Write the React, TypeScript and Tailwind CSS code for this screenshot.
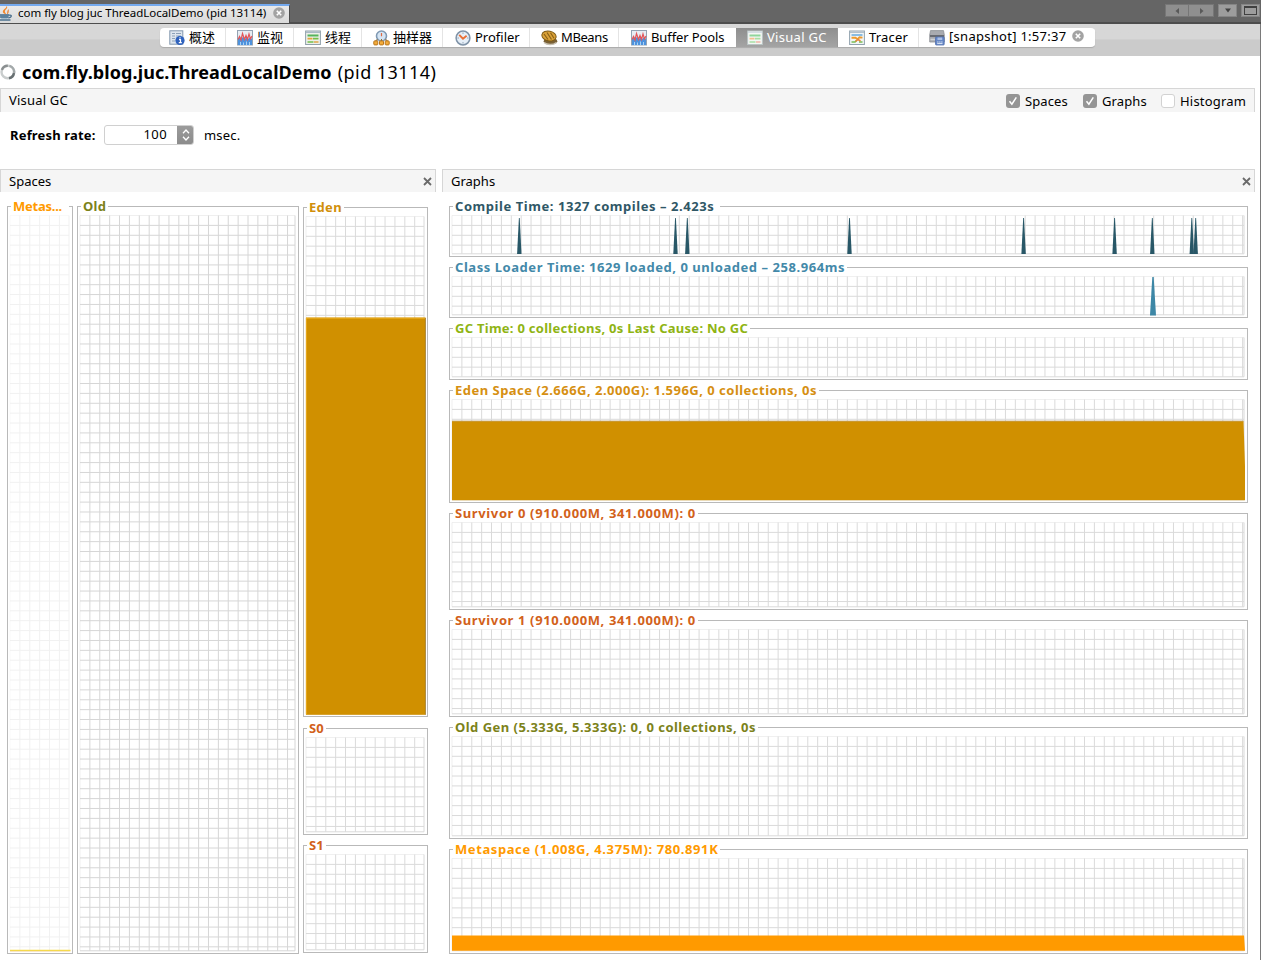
import type { ReactNode } from "react";

const STEP = 9.883;

type ChartProps = {
  w: number;
  h: number;
  x0?: number;
  right?: number;
  grid?: string;
  children?: ReactNode;
};

// w and h are the inner drawing size; the first grid row lies half a pixel from the top.
function Chart({ w, h, x0 = 2, right = 3, grid = "#dadada", children }: ChartProps) {
  const x1 = w - right;
  const y0 = 0.5;
  const y1 = h - 2.2;
  let d = "";
  for (let x = x0 + STEP; x < x1 - 1; x += STEP) d += `M${x.toFixed(2)} ${y0}V${y1}`;
  for (let y = y0 + STEP; y < y1 - 1; y += STEP) d += `M${x0} ${y.toFixed(2)}H${x1}`;
  return (
    <svg width={w} height={h} viewBox={`0 0 ${w} ${h}`} className="block shrink-0" fill="none">
      <path d={d} stroke={grid} strokeWidth="1" />
      <path d={`M${x1} ${y0}V${y1}M${x0} ${y1}H${x1}`} stroke={grid} strokeWidth="1" />
      <path d={`M${x0} ${y0}H${x1}M${x0} ${y0}V${y1}`} stroke={grid} strokeOpacity="0.4" strokeWidth="1" />
      {children}
    </svg>
  );
}

type PanelProps = { className: string; title: string; titleClass: string; children: ReactNode };

function Panel({ className, title, titleClass, children }: PanelProps) {
  return (
    <section className={`flex shrink-0 flex-col items-start border border-[#b9b9b9] ${className}`}>
      <h3
        className={`-mt-[10px] ml-[3px] h-[18px] w-fit whitespace-nowrap bg-white pl-[2px] pr-[2px] text-[13px] font-bold leading-[18px] ${titleClass}`}
      >
        {title}
      </h3>
      {children}
    </section>
  );
}

function CloseCircle() {
  return (
    <svg width="12" height="12" viewBox="0 0 12 12" className="shrink-0">
      <circle cx="6" cy="6" r="5.8" fill="#a3a3a3" />
      <path d="M3.8 3.8l4.4 4.4M8.2 3.8L3.8 8.2" stroke="#fff" strokeWidth="1.6" />
    </svg>
  );
}

function CloseX() {
  return (
    <svg width="9" height="9" viewBox="0 0 9 9" className="shrink-0">
      <path d="M1 1l7 7M8 1L1 8" stroke="#6a6a6a" strokeWidth="1.8" />
    </svg>
  );
}

function JavaIcon() {
  return (
    <svg width="13" height="15" viewBox="0 0 13 15" className="shrink-0">
      <path d="M6.500 0C9 2.200 4 4 5 6c.4 1 1 1.300 1 2.500C3 7.500 1.800 5.500 4 3.500 5.800 2 6.500 1.500 6.500 0z" fill="#f0872c" />
      <path d="M9 3C6.500 5 8 6 6.800 8.300 9.800 6.800 8 5.200 9 3z" fill="#e8731a" />
      <path d="M0 8.500h9.500c0 2.200-1 3.700-2.500 4.200H1.500L0 11.500z" fill="#8fb0c8" />
      <path d="M0 9h9.200M9.300 9.300c2.700-.6 3 2-.9 2.700M.2 11h8M0 14h10.500" stroke="#4c718e" strokeWidth="1.300" fill="none" />
    </svg>
  );
}

function OverviewIcon() {
  return (
    <svg width="16" height="16" viewBox="0 0 16 16">
      <rect x=".8" y=".8" width="13" height="13.400" fill="#dfe7ef" stroke="#8498ae" />
      <path d="M3 3.500h3M7 3.500h5M3 6h3M7 6h5M3 8.500h3M3 11h3" stroke="#8da1b8" strokeWidth="1.200" />
      <circle cx="11" cy="10.500" r="4.600" fill="#2f62bd" />
      <path d="M10 9.600h1.500v3M9.800 12.700h3M11 7.300v1.200" stroke="#fff" strokeWidth="1.200" fill="none" />
    </svg>
  );
}

function MonitorIcon() {
  return (
    <svg width="16" height="16" viewBox="0 0 16 16">
      <rect x=".5" y=".5" width="15" height="14.500" fill="#e8edf3" stroke="#94a3b3" />
      <path d="M1 12V9l2-2.500L4.500 9 6 6.500 8 9l2-2.500 1.500 2.500L13 7l2 2v6H1z" fill="#4d92dd" />
      <path d="M1 9.500L2.500 6.500 4 10l1.500-6.500L7.500 9.500 9 5.500l1.500 4L12 4 13.500 9 15 6" stroke="#e2575a" strokeWidth="1.200" fill="none" />
      <path d="M3.500 15v-3M6.500 15v-2.500M9.500 15v-3.500M12.500 15v-3" stroke="#a9d1f5" strokeWidth="1" />
    </svg>
  );
}

function ThreadsIcon({ pale = false }: { pale?: boolean }) {
  return (
    <svg width="16" height="16" viewBox="0 0 16 16">
      <rect x=".6" y="1" width="14.800" height="13.500" fill={pale ? "#f4f7f4" : "#eef0ea"} stroke={pale ? "#b9c4c4" : "#90a0aa"} />
      <path d="M1 2.200h14" stroke={pale ? "#d4dde4" : "#aab9c6"} strokeWidth="1.600" />
      <path d="M2.500 5.500h11" stroke={pale ? "#8fd69b" : "#55b45b"} strokeWidth="1.900" />
      <path d="M2.500 8.700h5" stroke={pale ? "#f4c08f" : "#e6a33c"} strokeWidth="1.700" />
      <path d="M8 8.700h5.500M2.500 12h6" stroke={pale ? "#a8dfa5" : "#73bf4b"} strokeWidth="1.700" />
      <path d="M9 12h4.500" stroke={pale ? "#f1b5a6" : "#e0a648"} strokeWidth="1.700" />
    </svg>
  );
}

function SamplerIcon() {
  return (
    <svg width="17" height="16" viewBox="0 0 17 16">
      <circle cx="8.500" cy="6" r="5" fill="#d5e5f4" stroke="#8099b3" strokeWidth="1.600" />
      <path d="M8.500 3v3.200" stroke="#df6a42" strokeWidth="1.200" />
      <path d="M3 11.500V10h2M14 11.500V10h-2M8.500 9v2" stroke="#8a6b34" fill="none" />
      <rect x=".8" y="10.900" width="4" height="4" rx=".8" fill="#f3ab3a" stroke="#b8751c" />
      <rect x="6.500" y="10.900" width="4" height="4" rx=".8" fill="#f3ab3a" stroke="#b8751c" />
      <rect x="12.200" y="10.900" width="4" height="4" rx=".8" fill="#f3ab3a" stroke="#b8751c" />
    </svg>
  );
}

function ProfilerIcon() {
  return (
    <svg width="16" height="16" viewBox="0 0 16 16">
      <circle cx="8" cy="8" r="6.900" fill="#e6eff8" stroke="#7f93a8" strokeWidth="1.500" />
      <path d="M8 2.500v1.300M8 12.200v1.300M2.500 8h1.300M12.200 8h1.300" stroke="#8295a8" />
      <path d="M4.200 4.800L8 8.700l3.600-2.900" stroke="#e96f35" strokeWidth="1.900" fill="none" />
    </svg>
  );
}

function BeansIcon() {
  return (
    <svg width="17" height="16" viewBox="0 0 17 16">
      <ellipse cx="9.500" cy="11.200" rx="6.800" ry="3.400" fill="#7a6136" />
      <path d="M3 12.500c3 2.600 9 2.800 12.500 0" stroke="#c8c1b2" strokeWidth="1.500" fill="none" />
      <ellipse cx="8" cy="6" rx="7.200" ry="4.900" fill="#dba238" stroke="#7d5a15" transform="rotate(12 8 6)" />
      <path d="M3 4l4 5.500M6 2.500l4.500 7M9.500 2.800l3.500 5.500" stroke="#8a6219" strokeWidth="1.200" fill="none" />
    </svg>
  );
}

function TracerIcon() {
  return (
    <svg width="16" height="16" viewBox="0 0 16 16">
      <rect x=".6" y="1" width="14.800" height="13.500" fill="#f2f5f6" stroke="#91a2ae" />
      <path d="M1 2.200h14" stroke="#b3c1cc" strokeWidth="1.500" />
      <path d="M2.500 5h11" stroke="#65a9dc" strokeWidth="1.600" />
      <path d="M2.500 7.800h4l2 1.500 2-2 3 .3" stroke="#ed9a2d" strokeWidth="1.900" fill="none" />
      <path d="M2.500 12h3.500l1.500-1.500M10 12h3.500" stroke="#78bd54" strokeWidth="1.700" fill="none" />
      <path d="M6.500 11.500l2.500-2 2.500 1.500" stroke="#e8853a" strokeWidth="1.500" fill="none" />
    </svg>
  );
}

function SnapshotIcon() {
  return (
    <svg width="16" height="16" viewBox="0 0 16 16">
      <path d="M1.500.6h13l.8 4.400v7H.7V5z" fill="#a9abb0" stroke="#8d9096" strokeWidth=".8" />
      <path d="M1 6h14" stroke="#686b72" strokeWidth="1.800" />
      <path d="M1.500 9.500h5" stroke="#cfd1d5" strokeWidth="1.500" />
      <rect x="6.500" y="7" width="8.700" height="8" rx=".8" fill="#6486c6" stroke="#5371ae" strokeWidth=".8" />
      <path d="M8.500 7.500h4.700v2.500H8.500z" fill="#a9bfe6" />
      <path d="M8.200 12h1.300M10.200 12h1.300M12.200 12h1.300M8.200 13.600h5.300" stroke="#dfe8f7" />
    </svg>
  );
}

type TabProps = { className: string; label: string; labelClass?: string; icon: ReactNode; children?: ReactNode };

function ViewTab({ className, label, labelClass = "leading-[19px]", icon, children }: TabProps) {
  return (
    <div className={`flex h-full shrink-0 items-center border-r ${className}`}>
      <span className="flex w-5 shrink-0">{icon}</span>
      <span className={`whitespace-nowrap text-[13px] ${labelClass}`}>{label}</span>
      {children}
    </div>
  );
}

function Check({ label, checked, className }: { label: string; checked: boolean; className: string }) {
  return (
    <label className={`flex shrink-0 items-center gap-[5px] ${className}`}>
      <span
        className={`flex size-[14px] items-center justify-center rounded-[3px] ${
          checked ? "bg-[#959595]" : "border border-[#d2d2d2] bg-white"
        }`}
      >
        {checked && (
          <svg width="10" height="10" viewBox="0 0 10 10" fill="none">
            <path d="M1.500 5.200l2.400 3L8.300 1.300" stroke="#fff" strokeWidth="1.500" />
          </svg>
        )}
      </span>
      <span className="whitespace-nowrap text-[13px] leading-[18px]">{label}</span>
    </label>
  );
}

// Compile bursts, as x positions inside the graph.
const COMPILE_SPIKES = [69.300, 225.500, 237.300, 399.500, 573.600, 664.600, 702.300, 741.800, 745.700];

export default function App() {
  return (
    <div className="flex h-[960px] w-[1261px] flex-col overflow-hidden bg-white font-['Noto_Sans','Noto_Sans_CJK_SC',sans-serif] text-black">
      <header className="flex h-[24px] shrink-0 justify-between border-b-2 border-[#4d4d4d] bg-[#656565]">
        <div className="mt-[4px] flex h-[19px] w-[290px] items-center border-r border-t-2 border-r-[#494949] border-t-[#74a9ee] bg-linear-to-b from-[#e9e9e9] to-[#dadada] pb-[3px]">
          <JavaIcon />
          <span className="ml-[5px] whitespace-nowrap text-[11.5px] leading-[16px] -tracking-[0.02px]">
            com fly blog juc ThreadLocalDemo (pid 13114)
          </span>
          <span className="ml-[7px] flex">
            <CloseCircle />
          </span>
        </div>
        <div className="mt-[4px] flex h-[13px] pr-px">
          <div className="flex w-[24px] items-center justify-center border border-[#767676] bg-[#8f8f8f]">
            <svg width="5" height="6" viewBox="0 0 5 6">
              <path d="M4 0v6L.5 3z" fill="#595959" />
            </svg>
          </div>
          <div className="flex w-[25px] items-center justify-center border border-l-0 border-[#767676] bg-[#8f8f8f]">
            <svg width="5" height="6" viewBox="0 0 5 6">
              <path d="M1 0v6l3.500-3z" fill="#595959" />
            </svg>
          </div>
          <div className="ml-[4px] flex w-[19px] items-center justify-center border border-[#858585] bg-[#9d9d9d]">
            <svg width="6" height="5" viewBox="0 0 6 5">
              <path d="M0 .5h6L3 4.500z" fill="#424242" />
            </svg>
          </div>
          <div className="ml-[4px] flex w-[19px] items-center justify-center border border-[#858585] bg-[#9d9d9d]">
            <span className="h-[9px] w-[13px] border border-t-2 border-[#404040]" />
          </div>
        </div>
      </header>

      <div className="flex min-h-0 grow flex-col border-r border-[#7a7a7a]">
        <nav className="flex h-[32px] shrink-0 bg-linear-to-b from-[#d7d7d7] from-46% to-[#cbcbcb] to-50% pl-[160px] pt-[4px]">
          <div className="flex h-[19px] w-[935px] overflow-hidden rounded-[4px] bg-white shadow-[0_1px_1px_#aaa]">
            <ViewTab className="w-[66px] border-[#e4e4e4] pl-[9px]" label="概述" icon={<OverviewIcon />} />
            <ViewTab className="w-[68px] border-[#e4e4e4] pl-[11px]" label="监视" icon={<MonitorIcon />} />
            <ViewTab className="w-[68px] border-[#e4e4e4] pl-[11px]" label="线程" icon={<ThreadsIcon />} />
            <ViewTab className="w-[81px] border-[#e4e4e4] pl-[11px]" label="抽样器" icon={<SamplerIcon />} />
            <ViewTab className="w-[87px] border-[#e4e4e4] pl-[12px]" label="Profiler" icon={<ProfilerIcon />} />
            <ViewTab
              className="w-[89px] border-[#e4e4e4] pl-[11px]"
              label="MBeans"
              labelClass="leading-[19px] -tracking-[0.4px]"
              icon={<BeansIcon />}
            />
            <ViewTab
              className="w-[117px] border-white pl-[12px]"
              label="Buffer Pools"
              labelClass="leading-[19px] -tracking-[0.1px]"
              icon={<MonitorIcon />}
            />
            <ViewTab
              className="w-[102px] border-[#989898] bg-linear-to-b from-[#8e8e8e] to-[#a4a4a4] pl-[11px]"
              label="Visual GC"
              labelClass="leading-[19px] tracking-[0.3px] text-white"
              icon={<ThreadsIcon pale />}
            />
            <ViewTab
              className="w-[81px] border-[#e4e4e4] pl-[11px]"
              label="Tracer"
              labelClass="leading-[19px] tracking-[0.2px]"
              icon={<TracerIcon />}
            />
            <ViewTab
              className="w-[176px] border-white pl-[10px]"
              label="[snapshot] 1:57:37"
              labelClass="mb-[3px] leading-[16px] tracking-[0.28px]"
              icon={<SnapshotIcon />}
            >
              <span className="mb-[4px] ml-[5px] flex">
                <CloseCircle />
              </span>
            </ViewTab>
          </div>
        </nav>

        <div className="flex h-[32px] shrink-0 items-center">
          <svg width="16" height="16" viewBox="0 0 16 16" fill="none">
            <circle cx="7.800" cy="8" r="6.300" stroke="#c9cdcd" strokeWidth="2.400" />
            <path d="M1.900 5.800A6.300 6.300 0 0 1 7.800 1.700" stroke="#8a8f90" strokeWidth="2.400" />
            <path d="M9 14.200A6.300 6.300 0 0 0 14 9" stroke="#687072" strokeWidth="2.400" />
            <path d="M14.100 9A6.300 6.300 0 0 0 9.500 1.900" stroke="#a3a9aa" strokeWidth="2.400" />
          </svg>
          <h1 className="ml-[6px] whitespace-nowrap text-[18px] font-bold leading-[24px] tracking-[0.09px]">
            com.fly.blog.juc.ThreadLocalDemo
          </h1>
          <span className="ml-[6px] whitespace-nowrap text-[18px] leading-[24px] tracking-[0.45px]">(pid 13114)</span>
        </div>

        <div className="flex h-[24px] w-[1255px] shrink-0 items-center border-l border-r border-t border-[#d6d6d6] bg-[#f5f5f5] pl-[8px]">
          <h2 className="grow pb-px text-[13px] leading-[18px] tracking-[0.2px]">Visual GC</h2>
          <Check label="Spaces" checked className="w-[77px] tracking-[0.1px]" />
          <Check label="Graphs" checked className="w-[78px] tracking-[0.1px]" />
          <Check label="Histogram" checked={false} className="w-[93px] tracking-[0.2px]" />
        </div>

        <div className="flex h-[57px] shrink-0 items-start pl-[10px] pt-[13px] text-[13px]">
          <span className="w-[94px] pt-px font-bold leading-[18px] tracking-[0.17px]">Refresh rate:</span>
          <div className="flex h-[20px] w-[90px] overflow-hidden rounded-[3px] border border-[#d0d0d0]">
            <span className="-mt-px grow pr-[10px] text-right leading-[18px] tracking-[0.4px]">100</span>
            <span className="-my-px -mr-px flex w-[17px] items-center justify-center bg-linear-to-b from-[#9c9c9c] to-[#8b8b8b]">
              <svg width="8" height="12" viewBox="0 0 8 12" fill="none" stroke="#fff" strokeWidth="1.300">
                <path d="M1 4.300L4 1l3 3.300M1 7.700L4 11l3-3.300" />
              </svg>
            </span>
          </div>
          <span className="ml-[10px] pt-px leading-[18px] tracking-[0.2px]">msec.</span>
        </div>

        <main className="flex min-h-0 grow gap-[6px]">
          <section className="flex w-[436px] shrink-0 flex-col">
            <div className="flex h-[23px] shrink-0 items-center justify-between border-l border-r border-t border-[#d6d6d6] bg-[#f5f5f5] pl-[8px] pr-[3px]">
              <h2 className="pb-px text-[13px] leading-[18px]">Spaces</h2>
              <CloseX />
            </div>
            <div className="flex pl-[7px] pt-[14px]">
              <Panel className="h-[748px] w-[66px]" title="Metas..." titleClass="w-[58px]! -tracking-[0.250px] text-[#ff9a00]">
                <Chart w={64} h={738} grid="#f1f1f1">
                  <path d="M2 735.300H62.500" stroke="#f7dc4a" strokeWidth="1.300" />
                  <path d="M2 736.300H62.500" stroke="#f5c870" strokeOpacity="0.500" strokeWidth="1" />
                </Chart>
              </Panel>
              <Panel className="ml-[4px] h-[748px] w-[222px]" title="Old" titleClass="text-[#7c821a] tracking-[0.3px]">
                <Chart w={220} h={738} grid="#d6d6d6" />
              </Panel>
              <div className="ml-[4px] mt-px flex flex-col">
                <Panel className="h-[510px] w-[125px]" title="Eden" titleClass="text-[#d18f0b] tracking-[0.3px]">
                  <Chart w={123} h={500}>
                    <rect x="2" y="101.500" width="119.500" height="397.300" fill="#d09000" />
                    <path d="M2 102.200H121.500M2.300 102V498.500" stroke="#f2b52a" strokeWidth=".8" />
                    <path d="M121.400 102V498.800" stroke="#9b7629" strokeWidth=".8" />
                  </Chart>
                </Panel>
                <Panel className="mt-[11px] h-[107px] w-[125px]" title="S0" titleClass="text-[#d2611a]">
                  <Chart w={123} h={97} />
                </Panel>
                <Panel className="mt-[10px] h-[108px] w-[125px]" title="S1" titleClass="text-[#d2611a]">
                  <Chart w={123} h={98} />
                </Panel>
              </div>
            </div>
          </section>

          <section className="flex w-[813px] shrink-0 flex-col">
            <div className="flex h-[23px] shrink-0 items-center justify-between border-l border-r border-t border-[#d6d6d6] bg-[#f5f5f5] pl-[8px] pr-[3px]">
              <h2 className="pb-px text-[13px] leading-[18px]">Graphs</h2>
              <CloseX />
            </div>
            <div className="flex flex-col pl-[7px] pt-[14px]">
              <Panel
                className="h-[51px] w-[799px]"
                title="Compile Time: 1327 compiles – 2.423s"
                titleClass="text-[#2f5766] tracking-[0.56px] pr-[6px]"
              >
                <Chart w={797} h={41}>
                  {COMPILE_SPIKES.map((x) => (
                    <path key={x} d={`M${x - 2.2} 39L${x - 0.4} 3h.8L${x + 2.2} 39z`} fill="#285767" />
                  ))}
                </Chart>
              </Panel>
              <Panel
                className="mt-[10px] h-[51px] w-[799px]"
                title="Class Loader Time: 1629 loaded, 0 unloaded – 258.964ms"
                titleClass="text-[#4389a9] tracking-[0.55px]"
              >
                <Chart w={797} h={41}>
                  <path d="M700 39.500L702.300 1h1.400L706 39.500z" fill="#3d87a6" />
                </Chart>
              </Panel>
              <Panel
                className="mt-[10px] h-[52px] w-[799px]"
                title="GC Time: 0 collections, 0s Last Cause: No GC"
                titleClass="text-[#8fb414] tracking-[0.27px]"
              >
                <Chart w={797} h={42} />
              </Panel>
              <Panel
                className="mt-[10px] h-[113px] w-[799px]"
                title="Eden Space (2.666G, 2.000G): 1.596G, 0 collections, 0s"
                titleClass="text-[#d68f12] tracking-[0.48px]"
              >
                <Chart w={797} h={103}>
                  <path d="M2 22H793.500L795 67V101.300H2z" fill="#d09000" />
                  <path d="M2 22H793.500" stroke="#c2a878" strokeWidth=".8" />
                </Chart>
              </Panel>
              <Panel
                className="mt-[10px] h-[97px] w-[799px]"
                title="Survivor 0 (910.000M, 341.000M): 0"
                titleClass="text-[#d2611a] tracking-[0.62px]"
              >
                <Chart w={797} h={87} />
              </Panel>
              <Panel
                className="mt-[10px] h-[97px] w-[799px]"
                title="Survivor 1 (910.000M, 341.000M): 0"
                titleClass="text-[#d2611a] tracking-[0.62px]"
              >
                <Chart w={797} h={87} />
              </Panel>
              <Panel
                className="mt-[10px] h-[112px] w-[799px]"
                title="Old Gen (5.333G, 5.333G): 0, 0 collections, 0s"
                titleClass="text-[#7c821a] tracking-[0.47px]"
              >
                <Chart w={797} h={102} />
              </Panel>
              <Panel
                className="mt-[10px] h-[105px] w-[799px]"
                title="Metaspace (1.008G, 4.375M): 780.891K"
                titleClass="text-[#ff9a00] tracking-[0.59px]"
              >
                <Chart w={797} h={95}>
                  <path d="M2 77.500H794L795 92.800H2z" fill="#ff9a00" />
                </Chart>
              </Panel>
            </div>
          </section>
        </main>
      </div>
    </div>
  );
}
